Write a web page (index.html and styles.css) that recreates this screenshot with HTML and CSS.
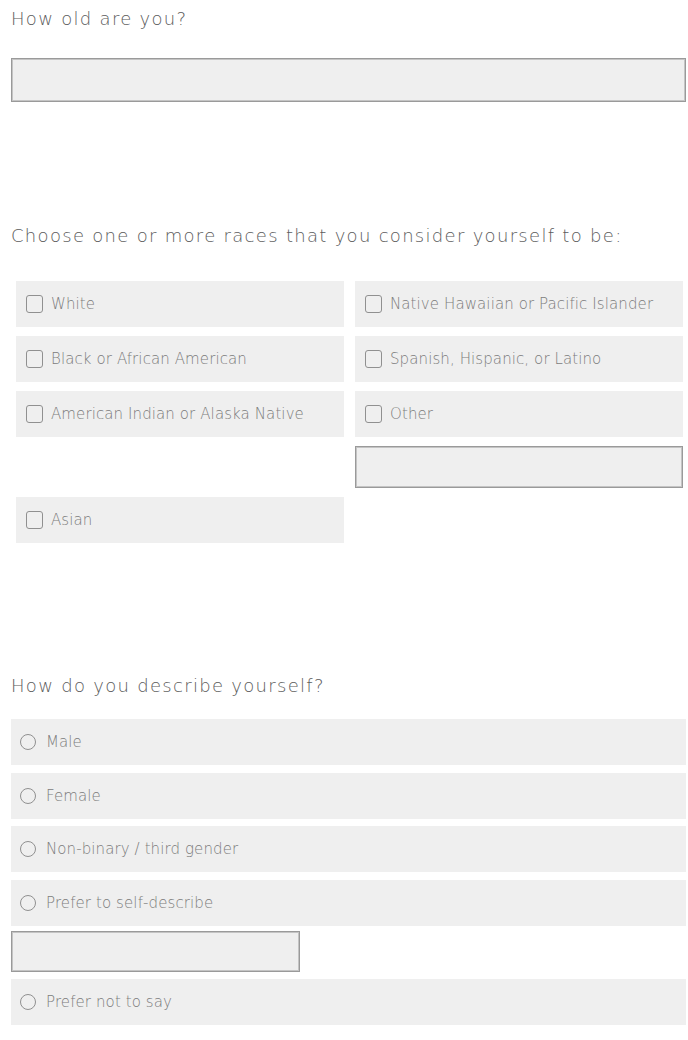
FILE: index.html
```html
<!DOCTYPE html>
<html>
<head>
<meta charset="utf-8">
<link rel="stylesheet" href="styles.css">
</head>
<body>
<div class="page">
  <section class="q q-age">
    <h2 class="title">How old are you?</h2>
    <div class="field field-full"></div>
  </section>

  <section class="q q-race">
    <h2 class="title">Choose one or more races that you consider yourself to be:</h2>
    <div class="grid">
      <label class="opt c1 r1"><span class="box"></span><span>White</span></label>
      <label class="opt c2 r1"><span class="box"></span><span>Native Hawaiian or Pacific Islander</span></label>
      <label class="opt c1 r2"><span class="box"></span><span>Black or African American</span></label>
      <label class="opt c2 r2"><span class="box"></span><span>Spanish, Hispanic, or Latino</span></label>
      <label class="opt c1 r3"><span class="box"></span><span>American Indian or Alaska Native</span></label>
      <label class="opt c2 r3"><span class="box"></span><span>Other</span></label>
      <div class="field c2 r4"></div>
      <label class="opt c1 r5"><span class="box"></span><span>Asian</span></label>
    </div>
  </section>

  <section class="q q-gender">
    <h2 class="title">How do you describe yourself?</h2>
    <div class="radios">
      <label class="ropt"><span class="dot"></span><span>Male</span></label>
      <label class="ropt"><span class="dot"></span><span>Female</span></label>
      <label class="ropt"><span class="dot"></span><span>Non-binary / third gender</span></label>
      <label class="ropt"><span class="dot"></span><span>Prefer to self-describe</span></label>
      <div class="field field-self"></div>
      <label class="ropt"><span class="dot"></span><span>Prefer not to say</span></label>
    </div>
  </section>
</div>
</body>
</html>
```

FILE: styles.css
```css
* { box-sizing: border-box; }
html, body { margin: 0; padding: 0; background: #fff; }
body {
  font-family: "DejaVu Sans", sans-serif;
  font-weight: 200;
}
.page {
  width: 675px;
  margin-left: 11px;
}
.title {
  margin: 0;
  font-size: 18px;
  line-height: 24px;
  font-weight: 200;
  color: #5c5c5c;
  letter-spacing: 1.3px;
  white-space: nowrap;
}
.field {
  background: #efefef;
  border: 1px solid #9a9a9a;
  box-shadow: inset 0 0 0 1px #c4c4c4;
}
.q-age { padding-top: 7px; }
.q-age .field-full { margin-top: 27px; height: 44px; }

.q-race { margin-top: 122px; }
.grid {
  margin: 33px 3px 0 5px;
  display: grid;
  grid-template-columns: 1fr 1fr;
  grid-template-rows: 46px 46px 46px 42px 46px;
  column-gap: 11px;
  row-gap: 9px;
}
.c1 { grid-column: 1; }
.c2 { grid-column: 2; }
.r1 { grid-row: 1; }
.r2 { grid-row: 2; }
.r3 { grid-row: 3; }
.r4 { grid-row: 4; }
.r5 { grid-row: 5; }

.opt, .ropt {
  display: flex;
  align-items: center;
  background: #efefef;
  font-size: 15px;
  color: #7c7c7c;
  letter-spacing: 0.1px;
  white-space: nowrap;
}
.opt { padding-left: 10px; gap: 8px; }
.box {
  width: 17px;
  height: 18px;
  border: 1.5px solid #909090;
  border-radius: 3px;
  flex: none;
}

.q-gender { margin-top: 131px; }
.radios {
  margin-top: 21px;
  display: flex;
  flex-direction: column;
  gap: 7.5px;
}
.ropt { height: 46px; padding-left: 9px; gap: 10px; }
.dot {
  width: 16px;
  height: 16px;
  border: 1.5px solid #909090;
  border-radius: 50%;
  flex: none;
}
.field-self {
  width: 289px;
  height: 41px;
  margin-top: -2px;
  margin-bottom: -0.5px;
}
```
